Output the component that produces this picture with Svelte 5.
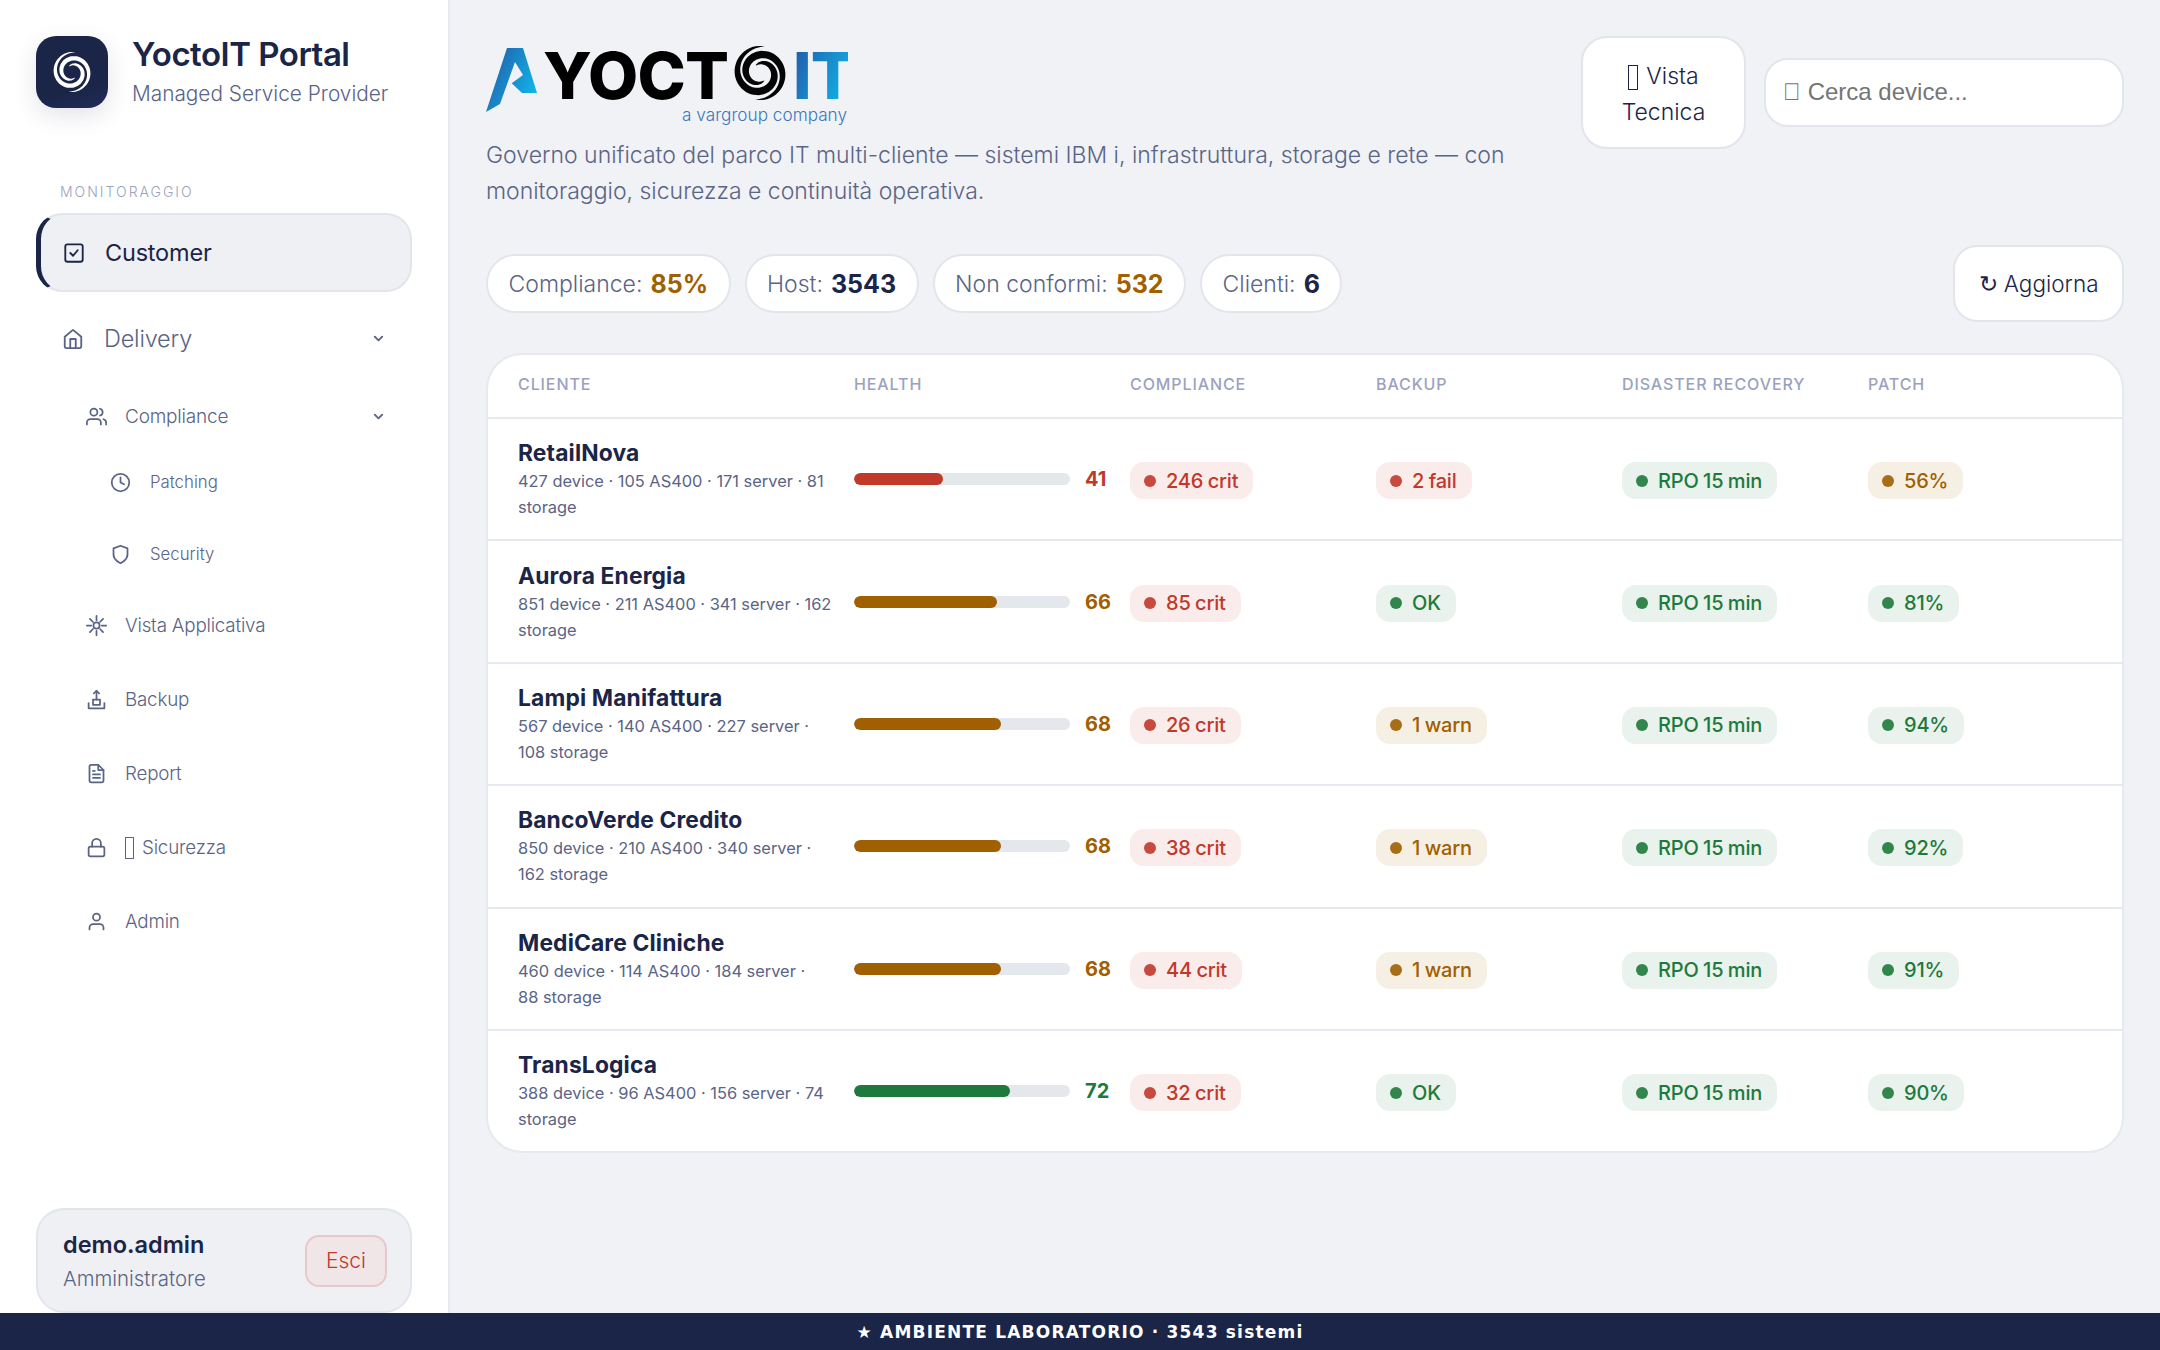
<script>
  // tapered two-arm swirl, used by both logos
  function swirl(cx, cy, R, width, sweep = 400, start = -80) {
    let d = '';
    for (const offset of [0, 180]) {
      const outer = [];
      const inner = [];
      const steps = 60;
      for (let i = 0; i <= steps; i++) {
        const t = i / steps;
        const a = ((start + offset - sweep * t) * Math.PI) / 180;
        const r = R * (1 - 0.68 * t);
        const w = width * Math.pow(Math.sin(Math.PI * t), 0.7);
        outer.push([cx + (r + w / 2) * Math.cos(a), cy + (r + w / 2) * Math.sin(a)]);
        inner.push([cx + (r - w / 2) * Math.cos(a), cy + (r - w / 2) * Math.sin(a)]);
      }
      const pts = [...outer, ...inner.reverse()];
      d += 'M' + pts.map((p) => p[0].toFixed(2) + ' ' + p[1].toFixed(2)).join('L') + 'Z';
    }
    return d;
  }

  const nav = [
    { label: 'Vista Applicativa', icon: 'sun' },
    { label: 'Backup', icon: 'backup' },
    { label: 'Report', icon: 'report' },
    { label: 'Sicurezza', icon: 'lock', box: true },
    { label: 'Admin', icon: 'user' }
  ];

  const stats = [
    { label: 'Compliance:', value: '85%', tone: 'amber' },
    { label: 'Host:', value: '3543', tone: '' },
    { label: 'Non conformi:', value: '532', tone: 'amber' },
    { label: 'Clienti:', value: '6', tone: '' }
  ];

  const rows = [
    { name: 'RetailNova', meta: '427 device · 105 AS400 · 171 server · 81 storage', health: 41, tone: 'red', crit: 246, backup: ['red', '2 fail'], patch: ['amber', '56%'] },
    { name: 'Aurora Energia', meta: '851 device · 211 AS400 · 341 server · 162 storage', health: 66, tone: 'amber', crit: 85, backup: ['green', 'OK'], patch: ['green', '81%'] },
    { name: 'Lampi Manifattura', meta: '567 device · 140 AS400 · 227 server · 108 storage', health: 68, tone: 'amber', crit: 26, backup: ['amber', '1 warn'], patch: ['green', '94%'] },
    { name: 'BancoVerde Credito', meta: '850 device · 210 AS400 · 340 server · 162 storage', health: 68, tone: 'amber', crit: 38, backup: ['amber', '1 warn'], patch: ['green', '92%'] },
    { name: 'MediCare Cliniche', meta: '460 device · 114 AS400 · 184 server · 88\u00a0storage', health: 68, tone: 'amber', crit: 44, backup: ['amber', '1 warn'], patch: ['green', '91%'] },
    { name: 'TransLogica', meta: '388 device · 96 AS400 · 156 server · 74 storage', health: 72, tone: 'green', crit: 32, backup: ['green', 'OK'], patch: ['green', '90%'] }
  ];
</script>

{#snippet icon(name)}
  <svg class="ico" viewBox="0 0 24 24" fill="none" stroke="currentColor" stroke-width="2" stroke-linecap="round" stroke-linejoin="round">
    {#if name === 'check'}
      <rect x="2.5" y="2.5" width="19" height="19" rx="2.5" /><path d="M8 12l3 3 5-6" />
    {:else if name === 'home'}
      <path d="M3 9.5L12 2l9 7.5V20a2 2 0 0 1-2 2H5a2 2 0 0 1-2-2z" /><path d="M9 22V12h6v10" />
    {:else if name === 'users'}
      <path d="M17 21v-2a4 4 0 0 0-4-4H5a4 4 0 0 0-4 4v2" /><circle cx="9" cy="7" r="4" /><path d="M23 21v-2a4 4 0 0 0-3-3.87" /><path d="M16 3.13a4 4 0 0 1 0 7.75" />
    {:else if name === 'clock'}
      <circle cx="12" cy="12" r="10" /><path d="M12 6v6l4 2" />
    {:else if name === 'shield'}
      <path d="M12 22s8-3.5 8-10V5l-8-3-8 3v7c0 6.500 8 10 8 10z" />
    {:else if name === 'sun'}
      <circle cx="12" cy="12" r="3.500" /><path d="M12 1v5M12 18v5M1 12h5M18 12h5M4.500 4.500l3.500 3.500M16 16l3.500 3.500M4.500 19.500L8 16M16 8l3.500-3.500" />
    {:else if name === 'backup'}
      <path d="M3 16v6h18v-6" /><path d="M8 12h8v6H8z" /><path d="M12 12V2" /><path d="M9 5l3-3 3 3" />
    {:else if name === 'report'}
      <path d="M14 2H6a2 2 0 0 0-2 2v16a2 2 0 0 0 2 2h12a2 2 0 0 0 2-2V8z" /><path d="M14 2v6h6" /><path d="M16 13H8M16 17H8M10 9H8" />
    {:else if name === 'lock'}
      <rect x="3" y="11" width="18" height="11" rx="2" /><path d="M7 11V7a5 5 0 0 1 10 0v4" />
    {:else if name === 'user'}
      <path d="M20 21v-2a4 4 0 0 0-4-4H8a4 4 0 0 0-4 4v2" /><circle cx="12" cy="7" r="4" />
    {/if}
  </svg>
{/snippet}

{#snippet chevron()}
  <svg class="chev" viewBox="0 0 24 24" fill="none" stroke="currentColor" stroke-width="3" stroke-linecap="round" stroke-linejoin="round"><path d="M6 9l6 6 6-6" /></svg>
{/snippet}

{#snippet pill(tone, text)}
  <span class="pill {tone}"><i></i>{text}</span>
{/snippet}

<div class="layout">
  <aside class="sidebar">
    <div class="brand">
      <div class="brand-mark">
        <svg viewBox="0 0 72 72"><path d={swirl(36, 36, 20, 4.500)} fill="#fff" /></svg>
      </div>
      <div class="brand-text">
        <div class="brand-name">YoctoIT Portal</div>
        <div class="brand-sub">Managed Service Provider</div>
      </div>
    </div>

    <div class="section">MONITORAGGIO</div>
    <nav>
      <a class="item top active">{@render icon('check')}<span>Customer</span></a>
      <a class="item top">{@render icon('home')}<span>Delivery</span>{@render chevron()}</a>
      <div class="tree">
        <a class="item sub compliance">{@render icon('users')}<span>Compliance</span>{@render chevron()}</a>
        <div class="subsub">
          <a class="item leaf">{@render icon('clock')}<span>Patching</span></a>
          <a class="item leaf">{@render icon('shield')}<span>Security</span></a>
        </div>
      </div>
      {#each nav as n}
        <a class="item sub">{@render icon(n.icon)}<span>{#if n.box}<i class="tofu"></i>{/if}{n.label}</span></a>
      {/each}
    </nav>

    <div class="account">
      <div>
        <div class="account-name">demo.admin</div>
        <div class="account-role">Amministratore</div>
      </div>
      <button class="logout">Esci</button>
    </div>
  </aside>

  <main>
    <header>
      <div class="intro">
        <svg class="logo" viewBox="0 0 362 86" width="362" height="86">
          <defs>
            <linearGradient id="blue" x1="0" y1="0" x2="1" y2="0.6">
              <stop offset="0" stop-color="#2453a4" /><stop offset="1" stop-color="#10b4e8" />
            </linearGradient>
          </defs>
          <path d="M21 6H37L51 51H36L25.700 41.300L37 33L29 20L14 62L0 70Z" fill="url(#blue)" />
          <text x="57" y="57" class="logo-word">YOCT</text>
          <path d={swirl(274, 31, 27, 7.500)} fill="#050505" />
          <text x="307" y="57" class="logo-word" fill="url(#blue)">IT</text>
          <text x="361" y="79" class="logo-tag" text-anchor="end">a vargroup company</text>
        </svg>
        <p>Governo unificato del parco IT multi-cliente — sistemi IBM i, infrastruttura, storage e rete — con monitoraggio, sicurezza e continuità operativa.</p>
      </div>
      <div class="tools">
        <button class="btn tech"><i class="tofu"></i>Vista Tecnica</button>
        <input class="search" placeholder="{'\u{F2000}'} Cerca device..." />
      </div>
    </header>

    <div class="stats">
      <div class="stat-list">
        {#each stats as s}
          <div class="stat">{s.label} <b class={s.tone}>{s.value}</b></div>
        {/each}
      </div>
      <button class="btn refresh"><span class="arrow">↻</span> Aggiorna</button>
    </div>

    <div class="card">
      <table>
        <colgroup>
          <col style="width:350px" /><col style="width:276px" /><col style="width:246px" /><col style="width:246px" /><col style="width:246px" /><col />
        </colgroup>
        <thead>
          <tr>
            <th>CLIENTE</th><th>HEALTH</th><th>COMPLIANCE</th><th>BACKUP</th><th>DISASTER RECOVERY</th><th>PATCH</th>
          </tr>
        </thead>
        <tbody>
          {#each rows as r}
            <tr>
              <td>
                <div class="name">{r.name}</div>
                <div class="meta">{r.meta}</div>
              </td>
              <td class="health-cell">
                <div class="health {r.tone}">
                  <div class="track"><div class="fill" style="width:{r.health}%"></div></div>
                  <b>{r.health}</b>
                </div>
              </td>
              <td>{@render pill('red', r.crit + ' crit')}</td>
              <td>{@render pill(r.backup[0], r.backup[1])}</td>
              <td>{@render pill('green', 'RPO 15 min')}</td>
              <td>{@render pill(r.patch[0], r.patch[1])}</td>
            </tr>
          {/each}
        </tbody>
      </table>
    </div>
  </main>
</div>

<footer>★ AMBIENTE LABORATORIO · 3543 sistemi</footer>

<style>
  :global(body) {
    background: #f0f2f6;
    color: #1a2547;
    font-family: Inter, 'Noto Sans', sans-serif;
  }

  .layout {
    display: grid;
    grid-template-columns: 450px 1fr;
    height: 100vh;
    overflow: hidden;
  }

  .sidebar {
    display: flex;
    flex-direction: column;
    background: #fff;
    border-right: 2px solid #e6e9f0;
    padding: 36px 36px 37px;
    box-sizing: border-box;
  }

  .brand {
    display: flex;
    align-items: flex-start;
    gap: 24px;
    height: 72px;
  }

  .brand-mark {
    width: 72px;
    height: 72px;
    border-radius: 20px;
    background: linear-gradient(165deg, #1a2547 70%, #202c5c);
    box-shadow: 0 8px 24px rgba(26, 37, 71, 0.12);
  }

  .brand-mark svg {
    display: block;
  }

  .brand-text {
    margin-top: -3px;
  }

  .brand-name {
    font-size: 33px;
    font-weight: 600;
    letter-spacing: -0.5px;
    line-height: 42px;
  }

  .brand-sub {
    margin-top: 3px;
    font-size: 20.800px;
    font-weight: 300;
    color: #5a6485;
    line-height: 32px;
  }

  .section {
    margin: 75px 0 12px 24px;
    font-size: 14px;
    font-weight: 300;
    line-height: 18px;
    letter-spacing: 2px;
    color: #9aa3bd;
  }

  nav {
    display: flex;
    flex-direction: column;
    gap: 7px;
  }

  .item {
    display: flex;
    align-items: center;
    color: #5a6485;
    box-sizing: border-box;
    font-weight: 300;
  }

  .item span {
    flex: 1;
  }

  .top {
    height: 79px;
    padding: 0 24px 0 26px;
    gap: 20px;
    font-size: 23.500px;
    letter-spacing: -0.2px;
    border-radius: 26px;
  }

  .top .ico {
    width: 22px;
    height: 22px;
  }

  .active {
    background: #eff0f3;
    border: 2px solid #e2e5ec;
    border-left: 5px solid #1a2547;
    color: #1a2547;
    padding-left: 22px;
    font-weight: 400;
  }

  .tree {
    display: flex;
    flex-direction: column;
    margin-top: -2px;
  }

  .sub {
    height: 67px;
    padding: 0 24px 0 50px;
    gap: 18px;
    font-size: 18.800px;
    letter-spacing: -0.2px;
  }

  .sub.compliance {
    font-size: 19px;
  }

  .sub .ico,
  .leaf .ico {
    width: 21px;
    height: 21px;
    flex: none;
  }

  .subsub {
    display: flex;
    flex-direction: column;
    gap: 14px;
    margin: 3px 0 2px;
  }

  .leaf {
    height: 58px;
    padding-left: 74px;
    gap: 19px;
    font-size: 16.800px;
  }

  .chev {
    width: 15px;
    height: 15px;
    flex: none;
    margin-right: 2px;
  }

  /* the empty box a browser draws for an emoji it has no font for */
  .tofu {
    display: inline-block;
    box-sizing: border-box;
    width: 9px;
    height: 22px;
    margin-right: 8px;
    border: 1.5px solid currentColor;
    vertical-align: -5px;
  }

  .btn .tofu {
    width: 10px;
    height: 25px;
    vertical-align: -6px;
  }

  .account {
    margin-top: auto;
    display: flex;
    align-items: center;
    justify-content: space-between;
    padding: 0 23px 0 25px;
    height: 105px;
    box-sizing: border-box;
    background: #eff0f4;
    border: 2px solid #e2e5ec;
    border-radius: 28px;
  }

  .account-name {
    font-size: 23.500px;
    font-weight: 600;
    line-height: 36px;
  }

  .account-role {
    font-size: 20.400px;
    font-weight: 300;
    line-height: 32px;
    color: #5a6485;
  }

  .logout {
    width: 82px;
    height: 52px;
    background: #f0e5e7;
    border: 2px solid #e8c8cb;
    border-radius: 14px;
    color: #c0392b;
    font: inherit;
    font-size: 21px;
    font-weight: 300;
  }

  main {
    padding: 36px 36px 0;
    min-width: 0;
  }

  header {
    display: flex;
    justify-content: space-between;
    align-items: flex-start;
  }

  .intro {
    width: 1050px;
    padding-top: 6px;
  }

  .logo {
    display: block;
  }

  .logo-word {
    font-family: Inter, sans-serif;
    font-size: 65px;
    font-weight: 800;
    letter-spacing: -0.8px;
  }

  .logo-tag {
    font-family: Inter, sans-serif;
    font-size: 17.200px;
    font-weight: 300;
    fill: #3b77bd;
  }

  .intro p {
    margin: 9px 0 0;
    font-size: 23px;
    font-weight: 300;
    line-height: 36px;
    color: #5a6485;
  }

  .tools {
    display: flex;
    align-items: center;
    gap: 18px;
  }

  .btn {
    background: #fff;
    border: 2px solid #e2e5ec;
    color: #1a2547;
    font: inherit;
    font-size: 23px;
    font-weight: 300;
    line-height: 36px;
  }

  .tech {
    width: 165px;
    height: 113px;
    padding: 2px 24px 0;
    border-radius: 26px;
  }

  .search {
    width: 360px;
    height: 69px;
    box-sizing: border-box;
    padding: 0 17px 2px;
    background: #fff;
    border: 2px solid #e2e5ec;
    border-radius: 24px;
    font-family: 'Liberation Sans', sans-serif;
    font-size: 24px;
  }

  .stats {
    display: flex;
    justify-content: space-between;
    align-items: center;
    margin-top: 36px;
  }

  .stat-list {
    display: flex;
    gap: 14px;
  }

  .stat {
    height: 59px;
    box-sizing: border-box;
    display: flex;
    align-items: center;
    gap: 8px;
    padding: 0 20.500px;
    background: #fff;
    border: 2px solid #e2e5ec;
    border-radius: 30px;
    font-size: 23px;
    font-weight: 300;
    color: #5a6485;
  }

  .stat b {
    font-size: 25px;
    font-weight: 700;
    color: #1a2547;
  }

  .stat b.amber {
    color: #a05f00;
  }

  .refresh {
    width: 171px;
    height: 77px;
    border-radius: 24px;
    font-size: 22.500px;
  }

  .arrow {
    font-family: 'DejaVu Sans', sans-serif;
    font-size: 23px;
  }

  .card {
    margin-top: 31px;
    background: #fff;
    border: 2px solid #e6e9f0;
    border-radius: 36px;
    overflow: hidden;
  }

  table {
    width: 100%;
    table-layout: fixed;
    border-collapse: collapse;
  }

  th {
    height: 57px;
    padding: 0 16px 5px;
    text-align: left;
    font-size: 16px;
    font-weight: 500;
    letter-spacing: 0.9px;
    color: #9aa3bd;
    border-bottom: 2px solid #e6e9f0;
  }

  td {
    height: 120.400px;
    padding: 0 16px;
    border-bottom: 2px solid #e6e9f0;
  }

  tr:last-child td {
    border-bottom: 0;
  }

  th:first-child,
  td:first-child {
    padding-left: 30px;
    padding-right: 0;
  }

  .name {
    font-size: 22.800px;
    font-weight: 700;
    letter-spacing: 0.15px;
    line-height: 30px;
  }

  .meta {
    font-size: 16.400px;
    line-height: 26px;
    color: #5a6485;
  }

  .health {
    display: flex;
    align-items: center;
    gap: 15px;
  }

  .health b {
    font-size: 20px;
  }

  .track {
    flex: none;
    width: 216px;
    height: 12px;
    border-radius: 6px;
    background: #e4e7ec;
    overflow: hidden;
  }

  .fill {
    height: 100%;
    border-radius: 6px;
    background: currentColor;
  }

  .health.red { color: #c0392b; }
  .health.amber { color: #a05f00; }
  .health.green { color: #1e7a3c; }

  .pill {
    display: inline-flex;
    align-items: center;
    gap: 10px;
    height: 37px;
    margin-top: 3px;
    padding: 0 15px 0 14px;
    border-radius: 14px;
    font-size: 20px;
    font-weight: 500;
    letter-spacing: -0.2px;
    word-spacing: -0.6px;
  }

  .pill i {
    width: 12px;
    height: 12px;
    border-radius: 50%;
    background: currentColor;
    opacity: 0.9;
  }

  .pill.red { background: #faecea; color: #c0392b; }
  .pill.amber { background: #f6efe3; color: #a05f00; }
  .pill.green { background: #e9f2ec; color: #1e7a3c; }

  footer {
    position: fixed;
    left: 0;
    right: 0;
    bottom: 0;
    height: 37px;
    display: flex;
    align-items: center;
    justify-content: center;
    background: #1a2547;
    color: #fff;
    font-family: 'DejaVu Sans', sans-serif;
    font-size: 17px;
    font-weight: 700;
    letter-spacing: 1.200px;
  }
</style>
